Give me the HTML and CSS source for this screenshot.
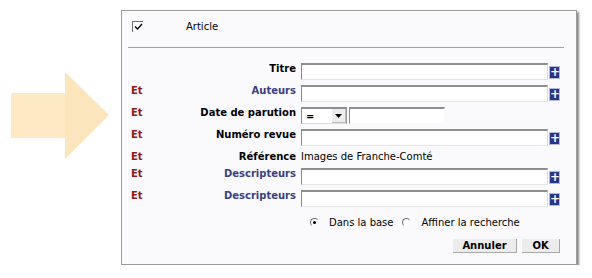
FILE: index.html
```html
<!DOCTYPE html>
<html lang="fr">
<head>
<meta charset="utf-8">
<title>Recherche</title>
<link rel="stylesheet" href="styles.css">
</head>
<body>
<div class="page">
  <svg class="arrow" width="100" height="88" viewBox="0 0 100 88">
    <rect x="0" y="21" width="54" height="45" fill="#fde9c3"/>
    <polygon points="54,0 98,43 54,87" fill="#fbe5bd"/>
  </svg>
  <div class="panel">
    <div class="head">
      <span class="check"><svg width="9" height="7" viewBox="0 0 9 7"><path d="M1 3.5 L3.5 6 L8 1" fill="none" stroke="#000" stroke-width="1.3"/></svg></span>
      <span class="head-label">Article</span>
    </div>
    <div class="rule"></div>
    <div class="form">
      <span class="et"></span><span class="lbl">Titre</span><span class="field"></span><span class="plus">+</span>
      <span class="et">Et</span><span class="lbl blue">Auteurs</span><span class="field"></span><span class="plus">+</span>
      <span class="et">Et</span><span class="lbl">Date de parution</span>
      <span class="date"><span class="select"><span class="eq">=</span><span class="drop"><svg width="7" height="4" viewBox="0 0 7 4"><polygon points="0,0 7,0 3.5,4" fill="#000"/></svg></span></span><span class="field short"></span></span><span></span>
      <span class="et">Et</span><span class="lbl">Numéro revue</span><span class="field"></span><span class="plus">+</span>
      <span class="et">Et</span><span class="lbl">Référence</span><span class="value">Images de Franche-Comté</span><span></span>
      <span class="et">Et</span><span class="lbl blue">Descripteurs</span><span class="field"></span><span class="plus">+</span>
      <span class="et">Et</span><span class="lbl blue">Descripteurs</span><span class="field"></span><span class="plus">+</span>
    </div>
    <div class="radios">
      <span class="radio on"></span><span class="rtext">Dans la base</span>
      <span class="radio"></span><span class="rtext">Affiner la recherche</span>
    </div>
    <div class="buttons">
      <span class="btn annuler">Annuler</span>
      <span class="btn ok">OK</span>
    </div>
  </div>
</div>
</body>
</html>
```
FILE: styles.css
```css
html, body {
  margin: 0;
  padding: 0;
  background: #ffffff;
}
body {
  font-family: "DejaVu Sans", Verdana, sans-serif;
  font-size: 11px;
  color: #000;
}
.page {
  display: flex;
  align-items: flex-start;
  padding: 10px 0 0 11px;
}
.arrow {
  margin-top: 62px;
  flex: none;
}
.panel {
  margin-left: 10px;
  width: 454px;
  height: 253px;
  border: 1px solid #9a9a9a;
  background: #fafafd;
  box-shadow: 2px 2px 2px #8a8a8a;
  display: flex;
  flex-direction: column;
}
.head {
  display: flex;
  align-items: center;
  height: 26px;
  padding: 2px 0 0 10px;
}
.check {
  width: 11px;
  height: 11px;
  border-top: 1px solid #6e6e6e;
  border-left: 1px solid #6e6e6e;
  display: flex;
  align-items: center;
  justify-content: center;
  box-sizing: border-box;
}
.head-label {
  margin-left: 43px;
  font-size: 10px;
}
.rule {
  margin: 8px 12px 0 6px;
  height: 1px;
  background: #a0a0a0;
}
.form {
  margin-top: 13px;
  padding-left: 9px;
  display: grid;
  grid-template-columns: 35px 135px 247px 12px;
  grid-template-rows: 22px 22px 22px 22px 17px 22px 22px;
  align-items: start;
}
.et, .lbl, .value {
  line-height: 14px;
  padding-top: 1px;
}
.et {
  color: #8c1b1b;
  font-weight: bold;
  font-size: 10px;
}
.lbl {
  font-weight: bold;
  font-size: 10px;
  text-align: right;
  padding-right: 5px;
  white-space: nowrap;
}
.blue {
  color: #3a3f85;
}
.value {
  white-space: nowrap;
  font-size: 10px;
}
.field {
  display: block;
  margin-top: 2px;
  height: 17px;
  box-sizing: border-box;
  background: #fff;
  border-style: solid;
  border-width: 2px 1px 1px 1px;
  border-color: #8e8e8e #dcdcdc #e6e6e6 #8a8a8a;
}
.plus {
  margin-top: 5px;
  margin-left: 1px;
  width: 11px;
  height: 13px;
  box-sizing: border-box;
  background: #2b3585;
  border: 1px solid #b8bbd6;
  color: #fff;
  font-weight: bold;
  font-size: 12px;
  line-height: 10px;
  text-align: center;
}
.date {
  display: flex;
  align-items: center;
  margin-top: 2px;
}
.date .field {
  margin-top: 0;
}
.select {
  display: flex;
  align-items: center;
  width: 46px;
  height: 17px;
  box-sizing: border-box;
  background: #fff;
  border-style: solid;
  border-width: 2px 1px 1px 1px;
  border-color: #8e8e8e #9a9a9a #dcdcdc #8a8a8a;
}
.eq {
  width: 28px;
  padding-left: 4px;
  font-weight: bold;
  font-size: 10px;
}
.drop {
  width: 14px;
  height: 13px;
  background: #ececec;
  border-right: 1px solid #bdbdbd;
  border-bottom: 1px solid #bdbdbd;
  display: flex;
  align-items: center;
  justify-content: center;
}
.field.short {
  width: 96px;
  margin-left: 2px;
  border-right-color: #fafafd;
  border-bottom-color: #fafafd;
}
.radios {
  display: flex;
  align-items: center;
  height: 24px;
  padding-left: 188px;
  font-size: 10px;
}
.radio {
  width: 9px;
  height: 9px;
  box-sizing: border-box;
  border-radius: 50%;
  border: 1px solid transparent;
  border-top-color: #6e6e6e;
  border-left-color: #6e6e6e;
  position: relative;
}
.radio.on::after {
  content: "";
  position: absolute;
  left: 2px;
  top: 2px;
  width: 3px;
  height: 3px;
  border-radius: 50%;
  background: #000;
}
.rtext {
  margin-left: 10px;
  margin-right: 9px;
}
.buttons {
  display: flex;
  justify-content: flex-end;
  gap: 5px;
  margin-top: 5px;
  padding-right: 16px;
}
.btn {
  height: 14px;
  box-sizing: border-box;
  background: #ececec;
  border-right: 1px solid #a8a8a8;
  border-bottom: 1px solid #a8a8a8;
  font-weight: bold;
  font-size: 10px;
  text-align: center;
  line-height: 13px;
}
.annuler {
  width: 64px;
}
.ok {
  width: 38px;
}
```
